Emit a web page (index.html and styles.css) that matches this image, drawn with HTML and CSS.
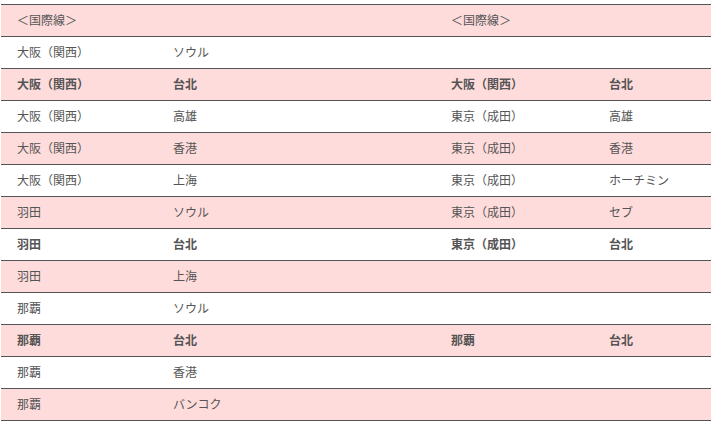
FILE: index.html
```html
<!DOCTYPE html>
<html lang="ja">
<head>
<meta charset="utf-8">
<link rel="stylesheet" href="styles.css">
</head>
<body>
<table class="routes">
  <colgroup>
    <col class="c1"><col class="c2"><col class="c3"><col class="c4">
  </colgroup>
  <tbody>
    <tr class="pink"><td>＜国際線＞</td><td></td><td>＜国際線＞</td><td></td></tr>
    <tr><td>大阪（関西）</td><td>ソウル</td><td></td><td></td></tr>
    <tr class="pink bold"><td>大阪（関西）</td><td>台北</td><td>大阪（関西）</td><td>台北</td></tr>
    <tr><td>大阪（関西）</td><td>高雄</td><td>東京（成田）</td><td>高雄</td></tr>
    <tr class="pink"><td>大阪（関西）</td><td>香港</td><td>東京（成田）</td><td>香港</td></tr>
    <tr><td>大阪（関西）</td><td>上海</td><td>東京（成田）</td><td>ホーチミン</td></tr>
    <tr class="pink"><td>羽田</td><td>ソウル</td><td>東京（成田）</td><td>セブ</td></tr>
    <tr class="bold"><td>羽田</td><td>台北</td><td>東京（成田）</td><td>台北</td></tr>
    <tr class="pink"><td>羽田</td><td>上海</td><td></td><td></td></tr>
    <tr><td>那覇</td><td>ソウル</td><td></td><td></td></tr>
    <tr class="pink bold"><td>那覇</td><td>台北</td><td>那覇</td><td>台北</td></tr>
    <tr><td>那覇</td><td>香港</td><td></td><td></td></tr>
    <tr class="pink"><td>那覇</td><td>バンコク</td><td></td><td></td></tr>
  </tbody>
</table>
</body>
</html>
```
FILE: styles.css
```css
html, body {
  margin: 0;
  padding: 0;
  background: #fff;
}
body {
  padding: 4px 0 0 1px;
  font-family: "Noto Sans CJK JP", "Noto Sans", sans-serif;
  font-size: 12px;
  color: #555;
}
.routes {
  width: 710px;
  border-collapse: collapse;
  table-layout: fixed;
}
.c1 { width: 156px; }
.c2 { width: 278px; }
.c3 { width: 158px; }
.c4 { width: 118px; }
.routes tr {
  border-top: 1px solid #555;
  border-bottom: 1px solid #555;
}
.routes td {
  height: 29px;
  padding: 0 0 2px 16px;
  vertical-align: middle;
  line-height: 16px;
  white-space: nowrap;
}
.pink td { background: #ffdcdc; }
.bold td { font-weight: bold; }
```
